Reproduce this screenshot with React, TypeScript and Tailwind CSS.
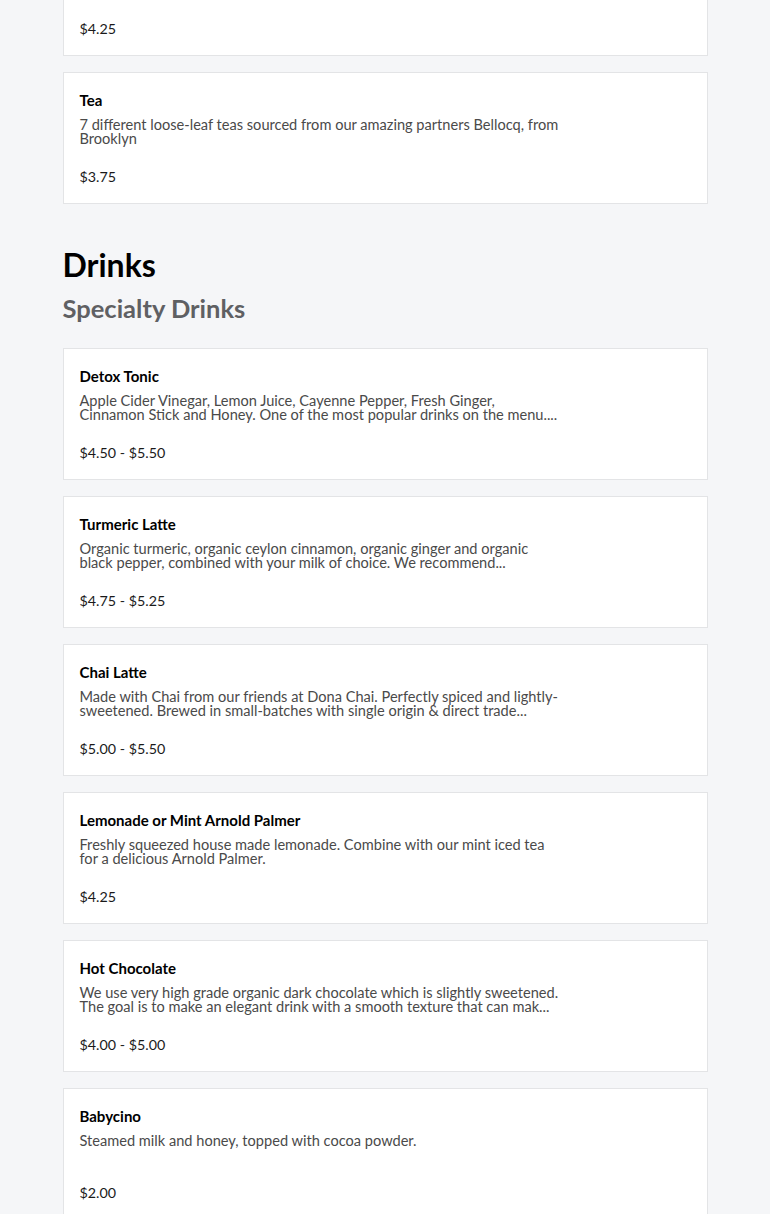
const font = { fontFamily: '"Lato", "Liberation Sans", sans-serif' };

interface Item {
  name: string;
  description: string;
  price: string;
}

const coffee: Item[] = [
  {
    name: "Iced Coffee",
    description: "Cold brewed in house and served over ice.",
    price: "$4.25",
  },
  {
    name: "Tea",
    description:
      "7 different loose-leaf teas sourced from our amazing partners Bellocq, from Brooklyn",
    price: "$3.75",
  },
];

// descriptions are cut to two lines, as the menu shows them
const drinks: Item[] = [
  {
    name: "Detox Tonic",
    description:
      "Apple Cider Vinegar, Lemon Juice, Cayenne Pepper, Fresh Ginger, Cinnamon Stick and Honey. One of the most popular drinks on the menu....",
    price: "$4.50 - $5.50",
  },
  {
    name: "Turmeric Latte",
    description:
      "Organic turmeric, organic ceylon cinnamon, organic ginger and organic black pepper, combined with your milk of choice. We recommend...",
    price: "$4.75 - $5.25",
  },
  {
    name: "Chai Latte",
    description:
      "Made with Chai from our friends at Dona Chai. Perfectly spiced and lightly-sweetened. Brewed in small-batches with single origin & direct trade...",
    price: "$5.00 - $5.50",
  },
  {
    name: "Lemonade or Mint Arnold Palmer",
    description:
      "Freshly squeezed house made lemonade. Combine with our mint iced tea for a delicious Arnold Palmer.",
    price: "$4.25",
  },
  {
    name: "Hot Chocolate",
    description:
      "We use very high grade organic dark chocolate which is slightly sweetened. The goal is to make an elegant drink with a smooth texture that can mak...",
    price: "$4.00 - $5.00",
  },
  {
    name: "Babycino",
    description: "Steamed milk and honey, topped with cocoa powder.",
    price: "$2.00",
  },
];

function MenuCard({ item }: { item: Item }) {
  return (
    <div className="bg-white border border-[#e3e4e6] px-4 pt-4 pb-4">
      <p className="text-[15px] leading-[22px] font-bold text-black">{item.name}</p>
      <p className="mt-[7px] h-[28px] max-w-[482px] text-[14.6px] leading-[14px] text-[#4a4a4a]">
        {item.description}
      </p>
      <p className="mt-[21px] text-[14.3px] leading-[20px] text-[#1a1a1a]">{item.price}</p>
    </div>
  );
}

export default function App() {
  return (
    <div className="min-h-screen bg-[#f5f6f8]" style={font}>
      <div className="mx-auto w-[645px] -mt-[76px] pb-10">
        <div className="flex flex-col gap-4">
          {coffee.map((item) => (
            <MenuCard key={item.name} item={item} />
          ))}
        </div>

        {/* Drinks */}
        <section className="mt-[41px]">
          <h2 className="text-[32px] leading-[40px] font-bold text-black">Drinks</h2>
          <h3 className="mt-[7px] text-[25.5px] leading-[32px] font-bold text-[#5f6063]">
            Specialty Drinks
          </h3>
          <div className="mt-[24px] flex flex-col gap-4">
            {drinks.map((item) => (
              <MenuCard key={item.name} item={item} />
            ))}
          </div>
        </section>
      </div>
    </div>
  );
}
